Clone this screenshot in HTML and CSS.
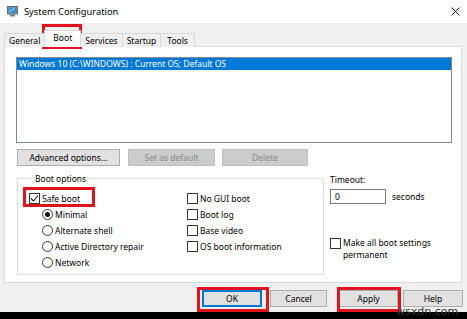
FILE: index.html
```html
<!DOCTYPE html>
<html lang="en">
<head>
    <meta charset="UTF-8">
    <meta name="viewport" content="width=device-width, initial-scale=1.0">
    <title>System Configuration</title>
    <link rel="stylesheet" href="styles.css">
</head>
<body>
    <div class="window">
        <div class="titlebar">
            <svg class="app-icon" width="11" height="11" viewBox="0 0 11 11">
                <rect x="0.5" y="0.5" width="10" height="7.5" fill="#8a99a8" stroke="#5b6b7a"/>
                <rect x="1.5" y="1.5" width="8" height="5.5" fill="#3d8fd6"/>
                <path d="M2 6 L8 2" stroke="#b9dcf7" stroke-width="1"/>
                <rect x="3" y="8.5" width="5" height="2" fill="#6f7d8a"/>
            </svg>
            <span class="title">System Configuration</span>
            <svg class="close" width="9" height="9" viewBox="0 0 9 9">
                <path d="M0.5 0.5 L8.5 8.5 M8.5 0.5 L0.5 8.5" stroke="#222" stroke-width="1"/>
            </svg>
        </div>

        <div class="dialog">
            <div class="tabs">
                <div class="tab">General</div>
                <div class="tab active">Boot</div>
                <div class="tab">Services</div>
                <div class="tab">Startup</div>
                <div class="tab tab-tools">Tools</div>
            </div>

            <div class="panel">
                <div class="listbox">
                    <div class="list-item selected">Windows 10 (C:\WINDOWS) : Current OS; Default OS</div>
                </div>

                <div class="list-actions">
                    <button class="btn btn-advanced">Advanced options...</button>
                    <button class="btn btn-default" disabled>Set as default</button>
                    <button class="btn btn-delete" disabled>Delete</button>
                </div>

                <div class="lower">
                    <fieldset class="group">
                        <legend>Boot options</legend>
                        <div class="options">
                            <div class="col col-left">
                                <label class="opt"><span class="check checked"><svg width="9" height="9" viewBox="0 0 9 9"><path d="M1 4.5 L3.5 7 L8 1.5" fill="none" stroke="#111" stroke-width="1.1"/></svg></span>Safe boot</label>
                                <label class="opt sub"><span class="radio on"></span>Minimal</label>
                                <label class="opt sub"><span class="radio"></span>Alternate shell</label>
                                <label class="opt sub"><span class="radio"></span>Active Directory repair</label>
                                <label class="opt sub"><span class="radio"></span>Network</label>
                            </div>
                            <div class="col">
                                <label class="opt"><span class="check"></span>No GUI boot</label>
                                <label class="opt"><span class="check"></span>Boot log</label>
                                <label class="opt"><span class="check"></span>Base video</label>
                                <label class="opt"><span class="check"></span>OS boot information</label>
                            </div>
                        </div>
                    </fieldset>

                    <div class="timeout">
                        <div class="timeout-label">Timeout:</div>
                        <div class="timeout-row">
                            <div class="textbox">0</div>
                            <span>seconds</span>
                        </div>
                        <label class="opt permanent"><span class="check"></span><span>Make all boot settings<br>permanent</span></label>
                    </div>
                </div>
            </div>

            <div class="dialog-buttons">
                <button class="btn btn-ok">OK</button>
                <button class="btn btn-cancel">Cancel</button>
                <button class="btn btn-apply">Apply</button>
                <button class="btn btn-help">Help</button>
            </div>
        </div>
        <div class="bottom-bar"></div>
    </div>

    <!-- red highlight marks -->
    <div class="mark mark-tab"></div>
    <div class="mark mark-safe"></div>
    <div class="mark mark-ok"></div>
    <div class="mark mark-apply"></div>
    <div class="watermark">wsxdn.com</div>
</body>
</html>
```

FILE: styles.css
```css
body {
    margin: 0;
    width: 467px;
    height: 319px;
    overflow: hidden;
    position: relative;
    font-family: "Noto Sans", sans-serif;
    font-size: 8.5px;
    color: #000;
}
.window {
    display: flex;
    flex-direction: column;
    height: 319px;
}
.titlebar {
    height: 23px;
    background: #fff;
    display: flex;
    align-items: center;
    padding: 0 7px;
}
.app-icon {
    margin-right: 6px;
}
.title {
    font-size: 9.3px;
    flex: 1;
}
.dialog {
    flex: 1;
    background: #f0f0f0;
    display: flex;
    flex-direction: column;
}
.tabs {
    display: flex;
    margin-top: 10px;
    padding-left: 4px;
    height: 13px;
    position: relative;
    z-index: 1;
}
.tab {
    height: 13px;
    line-height: 13px;
    padding: 0 4px;
    border: 1px solid #d9d9d9;
    border-bottom: none;
    margin-left: -1px;
    background: #f0f0f0;
}
.tab:first-child {
    margin-left: 0;
}
.tab-tools {
    padding: 0 6px;
}
.tab.active {
    background: #fff;
    height: 16px;
    margin-top: -3px;
    line-height: 14px;
    padding: 0 8px;
}
.panel {
    margin: 0 5px 0 4px;
    height: 237px;
    box-sizing: border-box;
    background: #fff;
    border: 1px solid #d9d9d9;
    padding: 10px 9px 0 11px;
}
.listbox {
    height: 84px;
    border: 1px solid #828790;
    background: #fff;
}
.list-item {
    height: 12px;
    line-height: 12px;
    padding-left: 2px;
}
.list-item.selected {
    background: #0078d7;
    color: #fff;
}
.btn {
    font-family: inherit;
    font-size: 8.5px;
    height: 17px;
    padding: 0;
    background: #e1e1e1;
    border: 1px solid #adadad;
    color: #000;
}
.btn:disabled {
    background: #cccccc;
    border-color: #bfbfbf;
    color: #8a8a8a;
}
.list-actions {
    display: flex;
    margin-top: 6px;
    padding-left: 1px;
}
.btn-advanced { width: 103px; }
.btn-default { width: 87px; margin-left: 8px; }
.btn-delete { width: 86px; margin-left: 7px; }

.lower {
    display: flex;
    margin-top: 7px;
    padding-left: 1px;
}
.group {
    margin: 0;
    width: 307px;
    height: 102px;
    box-sizing: border-box;
    border: 1px solid #dcdcdc;
    padding: 6px 0 0 11px;
}
.group legend {
    margin-left: 5px;
    padding: 0 1px;
    line-height: 11px;
}
.options {
    display: flex;
}
.col {
    display: flex;
    flex-direction: column;
}
.col-left {
    width: 158px;
}
.opt {
    display: flex;
    align-items: center;
    height: 16px;
}
.opt.sub {
    padding-left: 13px;
}
.check {
    width: 9px;
    height: 9px;
    border: 1px solid #333;
    background: #fff;
    margin-right: 2px;
    display: flex;
    align-items: center;
    justify-content: center;
}
.radio {
    width: 9px;
    height: 9px;
    border: 1px solid #333;
    border-radius: 50%;
    background: #fff;
    margin-right: 2px;
    display: flex;
    align-items: center;
    justify-content: center;
}
.radio.on::after {
    content: "";
    width: 5px;
    height: 5px;
    border-radius: 50%;
    background: #111;
}
.timeout {
    margin-left: 6px;
    display: flex;
    flex-direction: column;
}
.timeout-label {
    line-height: 11px;
    margin-top: 1px;
}
.timeout-row {
    display: flex;
    align-items: center;
    margin-top: 4px;
}
.textbox {
    width: 50px;
    height: 13px;
    line-height: 13px;
    border: 1px solid #7a7a7a;
    padding-left: 4px;
    margin-right: 6px;
}
.opt.permanent {
    margin-top: 33px;
    align-items: flex-start;
    height: auto;
    line-height: 12px;
}
.opt.permanent .check {
    margin-top: 1px;
}
.dialog-buttons {
    display: flex;
    justify-content: flex-end;
    margin-top: 7px;
    padding-right: 4px;
}
.btn-ok {
    width: 60px;
    border: 2px solid #0078d7;
}
.btn-cancel { width: 57px; margin-left: 8px; }
.btn-apply { width: 59px; margin-left: 12px; }
.btn-help { width: 60px; margin-left: 5px; }

.bottom-bar {
    height: 7px;
    background: #000;
}

.mark {
    position: absolute;
    border: 3px solid #e0141e;
    box-sizing: border-box;
}
.mark-tab { left: 42px; top: 24px; width: 40px; height: 25px; }
.mark-safe { left: 23px; top: 187px; width: 72px; height: 20px; }
.mark-ok { left: 197px; top: 287px; width: 72px; height: 25px; }
.mark-apply { left: 337px; top: 287px; width: 64px; height: 25px; }

.watermark {
    position: absolute;
    left: 396px;
    top: 305px;
    font-size: 11px;
    color: #333;
    font-family: "DejaVu Sans", sans-serif;
}
```
